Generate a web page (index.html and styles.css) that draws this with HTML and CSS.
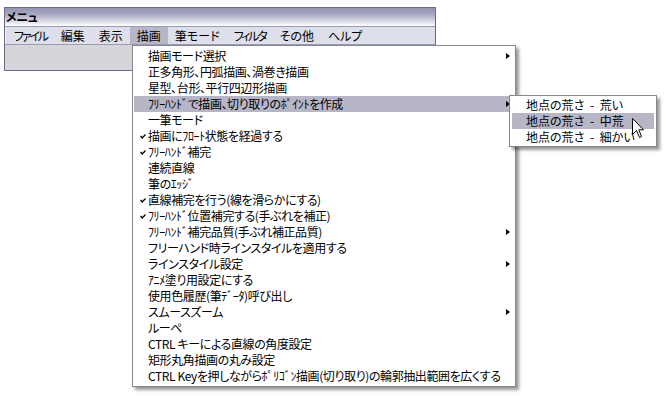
FILE: index.html
```html
<!DOCTYPE html>
<html lang="ja">
<head>
<meta charset="utf-8">
<title>メニュ</title>
<link rel="stylesheet" href="styles.css">
</head>
<body>
<div class="window">
  <div class="titlebar">メニュ</div>
  <div class="menubar">
    <span class="mb-item narrow">ファイル</span>
    <span class="mb-item">編集</span>
    <span class="mb-item">表示</span>
    <span class="mb-item active">描画</span>
    <span class="mb-item">筆モード</span>
    <span class="mb-item narrow">フィルタ</span>
    <span class="mb-item">その他</span>
    <span class="mb-item">ヘルプ</span>
  </div>
  <div class="client"></div>
</div>

<div class="dropdown">
  <div class="item"><span class="label">描画モード選択</span><span class="arrow"></span></div>
  <div class="item"><span class="label">正多角形、円弧描画、渦巻き描画</span></div>
  <div class="item"><span class="label">星型、台形、平行四辺形描画</span></div>
  <div class="item hl"><span class="label">ﾌﾘｰﾊﾝﾄﾞで描画、切り取りのﾎﾟｲﾝﾄを作成</span><span class="arrow"></span></div>
  <div class="item"><span class="label">一筆モード</span></div>
  <div class="item checked"><svg class="check" width="6" height="5" viewBox="0 0 6 5"><polyline points="0.5,2 2.2,4 5.5,0.5" fill="none" stroke="#000" stroke-width="1.3"/></svg><span class="label">描画にﾌﾛｰﾄ状態を経過する</span></div>
  <div class="item checked"><svg class="check" width="6" height="5" viewBox="0 0 6 5"><polyline points="0.5,2 2.2,4 5.5,0.5" fill="none" stroke="#000" stroke-width="1.3"/></svg><span class="label">ﾌﾘｰﾊﾝﾄﾞ補完</span></div>
  <div class="item"><span class="label">連続直線</span></div>
  <div class="item"><span class="label">筆のｴｯｼﾞ</span></div>
  <div class="item checked"><svg class="check" width="6" height="5" viewBox="0 0 6 5"><polyline points="0.5,2 2.2,4 5.5,0.5" fill="none" stroke="#000" stroke-width="1.3"/></svg><span class="label">直線補完を行う(線を滑らかにする)</span></div>
  <div class="item checked"><svg class="check" width="6" height="5" viewBox="0 0 6 5"><polyline points="0.5,2 2.2,4 5.5,0.5" fill="none" stroke="#000" stroke-width="1.3"/></svg><span class="label">ﾌﾘｰﾊﾝﾄﾞ位置補完する(手ぶれを補正)</span></div>
  <div class="item"><span class="label">ﾌﾘｰﾊﾝﾄﾞ補完品質(手ぶれ補正品質)</span><span class="arrow"></span></div>
  <div class="item"><span class="label">フリーハンド時ラインスタイルを適用する</span></div>
  <div class="item"><span class="label">ラインスタイル設定</span><span class="arrow"></span></div>
  <div class="item"><span class="label">ｱﾆﾒ塗り用設定にする</span></div>
  <div class="item"><span class="label">使用色履歴(筆ﾃﾞｰﾀ)呼び出し</span></div>
  <div class="item"><span class="label">スムースズーム</span><span class="arrow"></span></div>
  <div class="item"><span class="label">ルーペ</span></div>
  <div class="item"><span class="label">CTRL キーによる直線の角度設定</span></div>
  <div class="item"><span class="label">矩形丸角描画の丸み設定</span></div>
  <div class="item"><span class="label">CTRL Keyを押しながらﾎﾟﾘｺﾞﾝ描画(切り取り)の輪郭抽出範囲を広くする</span></div>
</div>

<div class="submenu">
  <div class="item"><span class="label">地点の荒さ <span class="dash">-</span> 荒い</span></div>
  <div class="item hl"><span class="label">地点の荒さ <span class="dash">-</span> 中荒</span></div>
  <div class="item"><span class="label">地点の荒さ <span class="dash">-</span> 細かい</span></div>
</div>

<svg class="cursor" width="13" height="21" viewBox="0 0 13 21">
  <path d="M0.5 0.5 L0.5 16.5 L4.5 12.5 L7.5 19.5 L9.5 18.5 L6.8 11.8 L11.5 11.8 Z" fill="#fff" stroke="#000" stroke-width="1" stroke-linejoin="miter"/>
</svg>
</body>
</html>
```

FILE: styles.css
```css
html, body {
  margin: 0;
  padding: 0;
  background: #ffffff;
}
body {
  width: 666px;
  height: 396px;
  position: relative;
  overflow: hidden;
  font-family: "Noto Sans CJK JP", "Noto Sans", sans-serif;
  font-size: 12px;
  color: #000;
  font-feature-settings: "palt";
}
.window {
  position: absolute;
  left: 4px;
  top: 7px;
  width: 432px;
  height: 64px;
  box-sizing: border-box;
  border: 1px solid #6c6c8a;
  display: flex;
  flex-direction: column;
  background: #d6d6da;
}
.titlebar {
  height: 18px;
  line-height: 18px;
  padding-left: 1px;
  font-weight: bold;
  letter-spacing: -0.5px;
  background: linear-gradient(to bottom, #9494b4 0%, #a8a8c2 35%, #d4d4e2 70%, #f6f6fa 92%, #ffffff 100%);
  border-bottom: 1px solid #9a9ab0;
}
.menubar {
  height: 17px;
  display: flex;
  align-items: stretch;
  padding-left: 1px;
  background: #dde0ea;
  border-left: 1px solid #f4f4f8;
}
.mb-item {
  padding: 0 7px;
  line-height: 17px;
}
.mb-item.narrow {
  letter-spacing: -2.2px;
}
.mb-item.active {
  background: #b8b7c8;
}
.client {
  flex: 1;
  border-top: 1px solid #9c9cae;
  background: #d6d6da;
}
.dropdown {
  position: absolute;
  left: 132px;
  top: 45px;
  width: 384px;
  box-sizing: border-box;
  padding: 2px 1px 2px 1px;
  background: #fff;
  border: 1px solid #86868e;
  box-shadow: 3px 3px 3px rgba(0, 0, 0, 0.4);
  letter-spacing: -0.4px;
}
.item {
  position: relative;
  height: 16px;
  line-height: 16px;
  padding-left: 14px;
  padding-right: 4px;
  display: flex;
  align-items: center;
  white-space: nowrap;
}
.item .label {
  flex: 1;
}
.item.hl {
  background: #b7b6c6;
}
.check {
  position: absolute;
  left: 6px;
  top: 6px;
}
.arrow {
  width: 0;
  height: 0;
  border-left: 4px solid #000;
  border-top: 3.5px solid transparent;
  border-bottom: 3.5px solid transparent;
}
.submenu {
  position: absolute;
  left: 509px;
  top: 95px;
  width: 148px;
  box-sizing: border-box;
  padding: 1px 2px 1px 2px;
  background: #fff;
  border: 1px solid #86868e;
  box-shadow: 3px 3px 3px rgba(0, 0, 0, 0.4);
}
.submenu .item {
  padding-left: 14px;
}
.dash {
  padding: 0 3px;
}
.cursor {
  position: absolute;
  left: 632px;
  top: 118px;
}
```
